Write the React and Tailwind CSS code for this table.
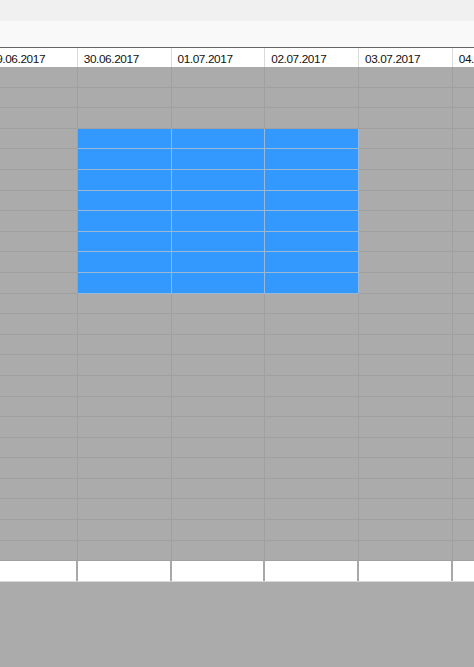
const dates = ['29.06.2017', '30.06.2017', '01.07.2017', '02.07.2017', '03.07.2017', '04.07.2017'];
const rowCount = 24;

function isSelected(r, c) {
  return r >= 3 && r <= 10 && c >= 1 && c <= 3;
}

export default function App() {
  return (
    <div className="w-[474px] h-[667px] overflow-hidden bg-[#ababab] flex flex-col" style={{ fontFamily: '"Liberation Sans", Arial, sans-serif' }}>
      <div className="h-[21px] bg-[#f0f0f0] shrink-0" />
      <div className="h-[26px] bg-[#f9f9f9] border-b border-[#646464] shrink-0 box-content" />

      <div className="ml-[-16px] flex flex-col shrink-0">
        {/* header */}
        <div className="flex h-[19px] bg-white">
          {dates.map((d) => (
            <div key={d} className="w-[93.75px] shrink-0 border-r border-[#dadada] pl-[6px] pt-[2px] text-[11.8px] tracking-[-0.4px] leading-[19px] text-[#111] whitespace-nowrap overflow-hidden">
              {d}
            </div>
          ))}
        </div>

        {/* body rows */}
        {Array.from({ length: rowCount }).map((_, r) => (
          <div key={r} className="flex h-[20.6px]">
            {dates.map((d, c) => (
              <div
                key={d}
                className={
                  isSelected(r, c)
                    ? 'w-[93.75px] shrink-0 bg-[#3399ff] border-r border-b border-[#9bb7d6]'
                    : 'w-[93.75px] shrink-0 border-r border-b border-[#a0a0a0]'
                }
              />
            ))}
          </div>
        ))}

        {/* empty new row */}
        <div className="flex h-[21px] bg-white border-b border-[#d8d8d8]">
          {dates.map((d) => (
            <div key={d} className="w-[93.75px] shrink-0 border-r-2 border-[#a8a8a8]" />
          ))}
        </div>
      </div>
    </div>
  );
}
